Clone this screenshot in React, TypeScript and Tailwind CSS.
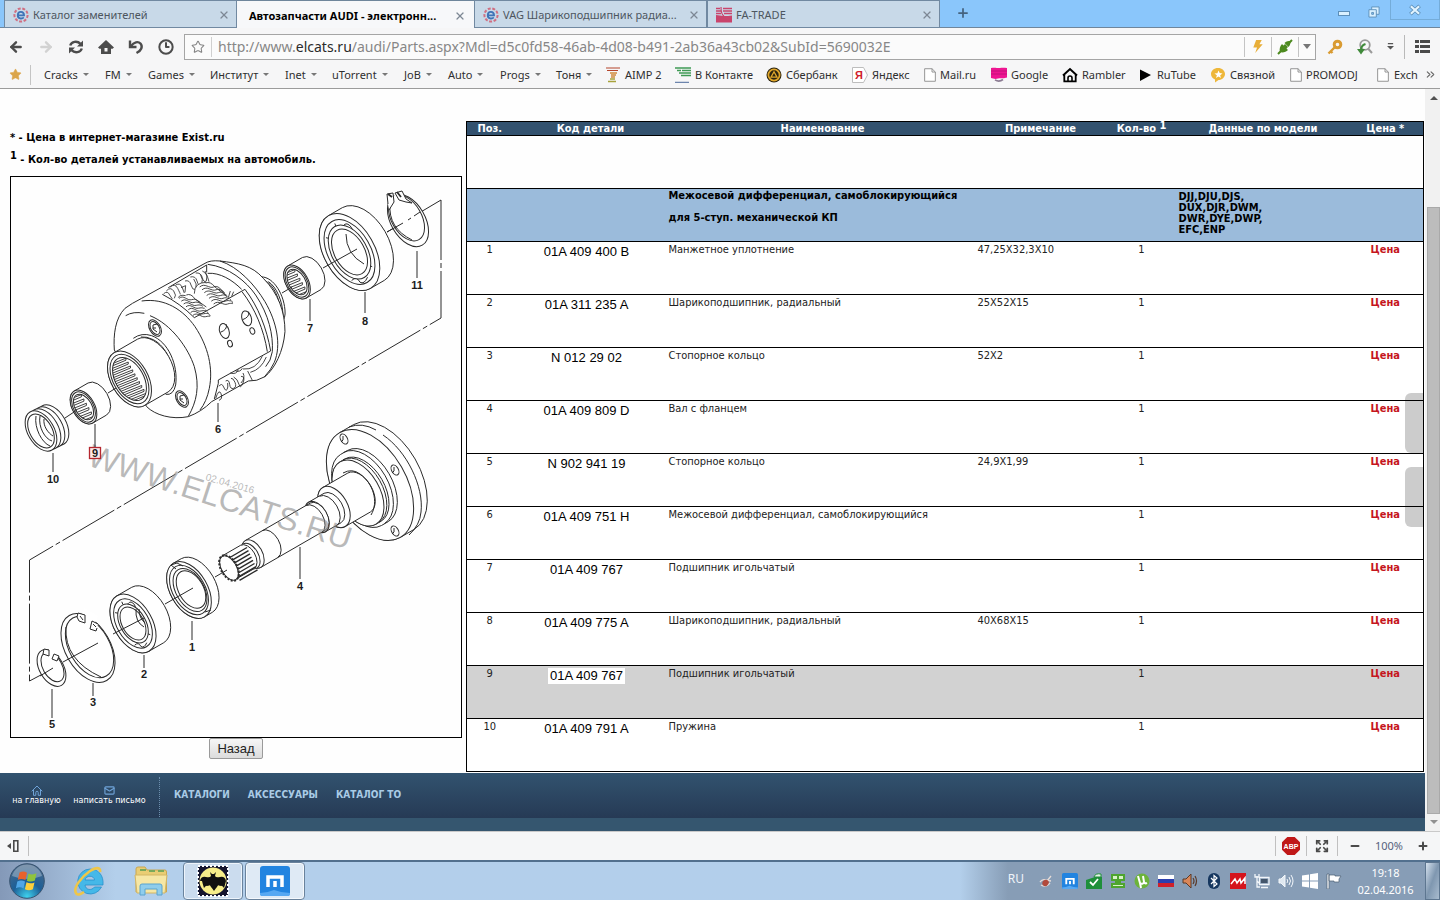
import type { ReactNode } from "react";
import {
  ArrowLeft,
  ArrowRight,
  ChevronsRight,
  Clock3,
  Expand,
  Mail,
  Minus,
  Plus,
  Star,
  X,
} from "lucide-react";

const UI_FONT = "font-['Noto_Sans',sans-serif]";
const PAGE_FONT = "font-['DejaVu_Sans_Condensed','DejaVu_Sans',sans-serif]";

/* ---------- small site icons ---------- */

function ElcatsIcon() {
  return (
    <svg viewBox="0 0 16 16" className="size-4 shrink-0" fill="none">
      <circle cx="8" cy="8" r="6.6" stroke="#cf6f82" strokeWidth="2" strokeDasharray="3 1.6" />
      <path d="M4.6 8.4h6.4c0-4.6-6-4.6-6.2-.2-.1 3.6 4 4.2 6 2.2" stroke="#3f74b8" strokeWidth="1.9" />
    </svg>
  );
}

function FaIcon() {
  return (
    <svg viewBox="0 0 16 16" className="size-4 shrink-0" fill="none">
      <path d="M0 8c3 0 5 1 8 1s5 0 8-.500V15.500H0z" fill="#c9446c" />
      <path d="M0 1.500h4M7 1.500h9M0 4h5M7 4h9M0 6.500h5M8 6.500h8" stroke="#c9446c" strokeWidth="1.500" />
      <path d="M5 0c0 6 1 8 3 9" stroke="#c9446c" strokeWidth="1.200" />
    </svg>
  );
}

function AimpIcon() {
  return (
    <svg viewBox="0 0 16 16" className="size-4 shrink-0" fill="none">
      <path d="M1 1h14M2 3.500h11" stroke="#b4452c" strokeWidth="1.200" />
      <path d="M5 6h7M6 8h5M6 10h4" stroke="#cf8a3e" strokeWidth="1.400" />
      <path d="M5 12h5M3 14.500h8" stroke="#a8a23c" strokeWidth="1.400" />
    </svg>
  );
}

function VkIcon() {
  return (
    <svg viewBox="0 0 16 16" className="size-4 shrink-0" fill="none">
      <path d="M0 1h16M2 3.500h4M7 3.500h9M4 6h12M6 8.500h10" stroke="#3f9a55" strokeWidth="1.300" />
      <path d="M0 15.300h14" stroke="#4c6a9a" strokeWidth="1" />
    </svg>
  );
}

function SberIcon() {
  return (
    <svg viewBox="0 0 16 16" className="size-4 shrink-0" fill="none">
      <circle cx="8" cy="8" r="7.500" fill="#2b2410" />
      <circle cx="8" cy="8" r="5.600" stroke="#e0a62b" strokeWidth="1.800" />
      <path d="M8 4.800l3 5.400H5z" fill="#2b2410" stroke="#e0a62b" strokeWidth="1.300" />
    </svg>
  );
}

function YandexIcon() {
  return (
    <svg viewBox="0 0 16 16" className="size-4 shrink-0" fill="none">
      <path d="M.5.5h11l4 7.500-4 7.500H.5z" fill="#fff" stroke="#bdbdbd" />
      <text x="3" y="12" fontSize="11" fontWeight="700" fill="#d0202a" fontFamily="Liberation Sans, sans-serif">
        Я
      </text>
    </svg>
  );
}

function PageIcon() {
  return (
    <svg viewBox="0 0 13 15" className="h-4 w-3 shrink-0" fill="none">
      <path d="M.7.7h8l3.600 3.600v10H.7z" fill="#fff" stroke="#8d8d8d" />
      <path d="M8.700.7v3.600h3.600" stroke="#8d8d8d" />
    </svg>
  );
}

function GoogleIcon() {
  return (
    <svg viewBox="0 0 16 16" className="size-4 shrink-0" fill="none">
      <path d="M0 1c5-1 6 .5 9 0s5 0 7 0V10.500c-4 1.500-6 0-9 1s-5 0-7-.5z" fill="#ee1591" />
      <path d="M0 4h16M0 7h16" stroke="#b01270" strokeWidth=".7" />
      <path d="M4 12.800c3 2 5 2 8-.300" stroke="#8b7b92" strokeWidth="1.600" />
    </svg>
  );
}

function RamblerIcon() {
  return (
    <svg viewBox="0 0 16 16" className="size-4 shrink-0" fill="none">
      <path d="M1 8.500L8 2l7 6.500" stroke="#000" strokeWidth="2" />
      <path d="M2.300 8v6.300h11.400V8" stroke="#000" strokeWidth="1.800" />
      <path d="M6 15v-4a2 2 0 014 0v4" stroke="#000" strokeWidth="1.600" />
    </svg>
  );
}

function PlayIcon() {
  return (
    <svg viewBox="0 0 14 16" className="h-4 w-[14px] shrink-0">
      <path d="M1 2.500L12 8 1 14z" fill="#000" />
    </svg>
  );
}

function SvyaznoyIcon() {
  return (
    <svg viewBox="0 0 16 16" className="size-4 shrink-0">
      <path d="M8 1c4 0 7 2.700 7 6s-3 6-6.500 6L5 15.500v-3C2.500 11.500 1 9.500 1 7c0-3.300 3-6 7-6z" fill="#eeb73a" />
      <path d="M8.500 3.500l1.200 2.600 2.800.4-2.300 1.700.7 2.800-2.400-1.600L6 11l.9-2.800-2.400-1.700 2.900-.3z" fill="#fff" />
    </svg>
  );
}

/* ---------- tabs ---------- */

function Tab({ icon, title, active }: { icon?: ReactNode; title: string; active?: boolean }) {
  return (
    <div
      className={
        active
          ? "flex h-7 w-[237px] items-center border-t border-[#6f869c] bg-[#f7f8fa] pt-[2px] pr-2 pl-3"
          : "flex h-7 w-[233px] items-center gap-1 border border-[#7189a1] bg-[#c8d9e8] pt-[2px] pr-[6px] pl-2"
      }
    >
      {icon}
      <a
        href="#tab"
        className={
          active
            ? "flex-1 text-[11px] leading-4 font-bold whitespace-nowrap text-black"
            : "flex-1 text-[11px] leading-4 whitespace-nowrap text-[#4d565f]"
        }
      >
        {title}
      </a>
      <button aria-label="Закрыть вкладку" className="text-[#7d8894]">
        <X size={12} strokeWidth={2.4} />
      </button>
    </div>
  );
}

function TabStrip() {
  return (
    <header className="flex h-7 shrink-0 bg-[#8ac6fb] pl-1 shadow-[inset_0_-1px_0_#6f869c]">
      <Tab icon={<ElcatsIcon />} title="Каталог заменителей" />
      <Tab active title="Автозапчасти AUDI - электронн..." />
      <Tab icon={<ElcatsIcon />} title="VAG Шарикоподшипник радиа..." />
      <Tab icon={<FaIcon />} title="FA-TRADE" />
      <button aria-label="Новая вкладка" className="mb-[2px] ml-4 text-[#45637f]">
        <Plus size={14} strokeWidth={3} />
      </button>
      <div className="ml-auto flex text-[#d9f0ff]">
        <button aria-label="Свернуть" className="flex h-6 w-7 items-end justify-center pb-2">
          <svg viewBox="0 0 12 5" className="h-[5px] w-3">
            <rect x=".5" y=".5" width="11" height="4" fill="#d9f0ff" stroke="#5d8fb8" />
          </svg>
        </button>
        <button aria-label="Восстановить" className="flex h-6 w-8 items-center justify-center">
          <svg viewBox="0 0 13 13" className="size-3" fill="#d9f0ff" stroke="#5d8fb8">
            <path d="M4 1h8v8H4z" />
            <path d="M1 4h8v8H1z" />
            <path d="M4 7h2v2H4z" fill="#8ac6fb" />
          </svg>
        </button>
        <button
          aria-label="Закрыть"
          className="flex h-5 w-[50px] items-center justify-center border border-t-0 border-[#74acd9]"
        >
          <svg viewBox="0 0 14 13" className="h-3 w-4">
            <path d="M2 2l10 9M12 2L2 11" stroke="#5d8fb8" strokeWidth="4" />
            <path d="M2.500 2.400l9 8.200M11.500 2.400l-9 8.200" stroke="#e2f4ff" strokeWidth="2.400" />
          </svg>
        </button>
      </div>
    </header>
  );
}

/* ---------- address bar ---------- */

function AddressRow() {
  return (
    <div className="flex h-[37px] shrink-0 items-center bg-[#f6f6f7] text-[#4c4c4c]">
      <nav className="flex w-[184px] items-center gap-[14px] pl-2">
        <button aria-label="Назад">
          <ArrowLeft size={16} strokeWidth={3.6} />
        </button>
        <button aria-label="Вперёд" className="text-[#d2d2d2]">
          <ArrowRight size={16} strokeWidth={3.6} />
        </button>
        <button aria-label="Обновить">
          <svg viewBox="0 0 16 16" className="size-4" fill="none" stroke="currentColor" strokeWidth="2.400">
            <path d="M2.200 6.500C3.500 2.500 9 1.300 12.500 4.800" />
            <path d="M13.800 9.500c-1.300 4-6.800 5.200-10.300 1.700" />
            <path d="M15 1.500v6H9z" fill="currentColor" stroke="none" />
            <path d="M1 14.500v-6h6z" fill="currentColor" stroke="none" />
          </svg>
        </button>
        <button aria-label="Домой">
          <svg viewBox="0 0 16 16" className="size-4" fill="currentColor">
            <path d="M8 1l8 7.500-1.500 1.300H13V15H3V9.800H1.500L0 8.500z" />
            <path d="M6.500 9h3v3.500h-3z" fill="#f6f6f7" />
          </svg>
        </button>
        <button aria-label="Отменить">
          <svg viewBox="0 0 16 16" className="size-4" fill="none" stroke="currentColor" strokeWidth="2.400">
            <path d="M2 1.500V8h6.500" />
            <path d="M3 7c3-4 7-5 9.500-2.500 2.500 3 1 7-4 9.500" />
          </svg>
        </button>
        <button aria-label="История">
          <Clock3 size={16} strokeWidth={3} />
        </button>
      </nav>
      <div className="flex h-[26px] flex-1 items-center border border-[#a5a5a5] bg-[#fbfbfb]">
        <button aria-label="В избранное" className="flex h-5 w-[27px] items-center justify-center border-r border-[#d0d0d0] text-[#858585]">
          <Star size={14} strokeWidth={1.8} />
        </button>
        <a href="#address" className="flex-1 truncate pl-[6px] text-[14px] leading-5 text-[#878787]">
          http://www.<span className="text-[#2b2b2b]">elcats.ru</span>
          /audi/Parts.aspx?Mdl=d5c0fd58-46ab-4d08-b491-2ab36a43cb02&amp;SubId=5690032E
        </a>
        <button aria-label="Ускорение" className="flex h-5 w-[27px] items-center justify-center border-l border-[#c4c4c4]">
          <svg viewBox="0 0 12 16" className="h-[15px] w-3">
            <path d="M4 1h6L7.500 5.500H11L3 15l2-6H1z" fill="#e8ae38" />
          </svg>
        </button>
        <button aria-label="Прокси" className="flex h-5 w-[27px] items-center justify-center border-l border-[#c4c4c4]">
          <svg viewBox="0 0 16 16" className="size-4" fill="#4d8a1f">
            <path d="M1 15l3-3M12 4l3-3" stroke="#4d8a1f" strokeWidth="2" />
            <path d="M3 13c-1-3 0-6 2-8l1.500 1.500L8 5l3 3-1.500 1.500L11 11c-2 2-5 3-8 2zM7.500 4c2-2 4-2 6-2 0 2 0 4-2 6z" />
          </svg>
        </button>
        <button aria-label="Список адресов" className="flex h-5 w-[17px] items-center justify-center border-l border-[#c4c4c4]">
          <svg viewBox="0 0 8 5" className="h-[5px] w-2">
            <path d="M0 0h8L4 5z" fill="#777" />
          </svg>
        </button>
      </div>
      <div className="flex h-full w-[124px] items-center pl-[11px]">
        <button aria-label="Пароли">
          <svg viewBox="0 0 16 16" className="size-4" fill="none" stroke="#d99b32">
            <circle cx="10.500" cy="5.500" r="3.300" strokeWidth="3" />
            <path d="M8 8l-6.500 6.500M3.500 12l2 2" strokeWidth="2.400" />
          </svg>
        </button>
        <button aria-label="Поиск" className="ml-[14px]">
          <svg viewBox="0 0 16 16" className="size-4" fill="none">
            <circle cx="8" cy="6" r="4.800" stroke="#9a9a9a" strokeWidth="1.800" />
            <path d="M11 9.500l4 4.500" stroke="#9a9a9a" strokeWidth="2" />
            <path d="M8.500 5C5.500 6 4 8 4 11" stroke="#3f8a3a" strokeWidth="2.200" />
            <path d="M0 10h8l-4 5.500z" fill="#3f8a3a" />
          </svg>
        </button>
        <button aria-label="Ещё" className="ml-[14px]">
          <svg viewBox="0 0 8 8" className="size-[7px]" fill="#555">
            <path d="M1 0h6v1.300H1zM0 3.300h8L4 7.500z" />
          </svg>
        </button>
        <span className="ml-[10px] h-6 border-l border-[#b9b9b9]" />
        <button aria-label="Меню" className="ml-[10px]">
          <svg viewBox="0 0 15 14" className="h-[14px] w-[15px]" fill="#4a4a4a">
            <path d="M0 0h4v3H0zM5 0h10v3H5zM0 5h4v3H0zM5 5h10v3H5zM0 10h4v3H0zM5 10h10v3H5z" />
          </svg>
        </button>
      </div>
    </div>
  );
}

/* ---------- bookmarks ---------- */

const folders = [
  { name: "Cracks", width: "w-[61px]" },
  { name: "FM", width: "w-[43px]" },
  { name: "Games", width: "w-[62px]" },
  { name: "Институт", width: "w-[75px]" },
  { name: "Inet", width: "w-[47px]" },
  { name: "uTorrent", width: "w-[72px]" },
  { name: "JoB", width: "w-[44px]" },
  { name: "Auto", width: "w-[52px]" },
  { name: "Progs", width: "w-[56px]" },
  { name: "Тоня", width: "w-[49px]" },
];

const links: { name: string; icon: ReactNode; width: string }[] = [
  { name: "AIMP 2", icon: <AimpIcon />, width: "w-[70px]" },
  { name: "В Контакте", icon: <VkIcon />, width: "w-[91px]" },
  { name: "Сбербанк", icon: <SberIcon />, width: "w-[86px]" },
  { name: "Яндекс", icon: <YandexIcon />, width: "w-[72px]" },
  { name: "Mail.ru", icon: <PageIcon />, width: "w-[67px]" },
  { name: "Google", icon: <GoogleIcon />, width: "w-[71px]" },
  { name: "Rambler", icon: <RamblerIcon />, width: "w-[77px]" },
  { name: "RuTube", icon: <PlayIcon />, width: "w-[71px]" },
  { name: "Связной", icon: <SvyaznoyIcon />, width: "w-[80px]" },
  { name: "PROMODJ", icon: <PageIcon />, width: "w-[87px]" },
];

function Bookmarks() {
  return (
    <nav className="flex h-6 shrink-0 items-center border-b border-[#9b9b9b] bg-[#f6f6f7] pb-1 text-[11px] leading-4 text-[#2f2f2f]">
      <button aria-label="Избранное" className="flex w-[30px] justify-center text-[#dba54a]">
        <Star size={13} fill="currentColor" strokeWidth={1} />
      </button>
      <span className="mr-[13px] h-5 border-l border-[#c4c4c4]" />
      {folders.map((f) => (
        <a key={f.name} href="#folder" className={`${f.width} flex shrink-0 items-center gap-[5px] whitespace-nowrap`}>
          {f.name}
          <svg viewBox="0 0 6 3" className="h-[3px] w-[6px] shrink-0">
            <path d="M0 0h6L3 3z" fill="#777" />
          </svg>
        </a>
      ))}
      {links.map((l) => (
        <a key={l.name} href="#link" className={`${l.width} flex shrink-0 items-center gap-1 whitespace-nowrap`}>
          {l.icon}
          {l.name}
        </a>
      ))}
      <a href="#link" className="flex flex-1 items-center gap-[5px] whitespace-nowrap">
        <PageIcon />
        Exch
      </a>
      <button aria-label="Ещё закладки" className="w-4 text-[#666]">
        <ChevronsRight size={13} strokeWidth={2} />
      </button>
    </nav>
  );
}

/* ---------- exploded parts drawing ---------- */

const AX = 0.866;
const AY = -0.5;
const ink = "#2a2a2a";

function Ring({ x, y, r, fill = "none" }: { x: number; y: number; r: number; fill?: string }) {
  return <ellipse cx={x} cy={y} rx={r * 0.6} ry={r} transform={`rotate(-30 ${x} ${y})`} fill={fill} />;
}

/* Cylinder whose near face is centred on x, y and which runs back along the shaft axis. */
function Cylinder({ x, y, r, d, face = true }: { x: number; y: number; r: number; d: number; face?: boolean }) {
  const bx = x + AX * d;
  const by = y + AY * d;
  const ux = r * 0.5;
  const uy = r * 0.866;
  return (
    <>
      <path
        fill="#fff"
        d={`M${x - ux} ${y - uy}L${bx - ux} ${by - uy}A${r * 0.6} ${r} -30 0 1 ${bx + ux} ${by + uy}L${x + ux} ${y + uy}A${r * 0.6} ${r} -30 0 1 ${x - ux} ${y - uy}`}
      />
      {face && <Ring x={x} y={y} r={r} fill="#fff" />}
    </>
  );
}

/* Right-hand half of a rim, seen on the side of a turned part. */
function Rim({ x, y, r }: { x: number; y: number; r: number }) {
  return <path d={`M${x - r * 0.5} ${y - r * 0.866}A${r * 0.6} ${r} -30 0 1 ${x + r * 0.5} ${y + r * 0.866}`} />;
}

function Needles({ id, x, y, r, step }: { id: string; x: number; y: number; r: number; step: number }) {
  const rows: number[] = [];
  for (let k = -r; k <= r; k += step) rows.push(k);
  return (
    <>
      <clipPath id={id}>
        <Ring x={x} y={y} r={r} />
      </clipPath>
      <g clipPath={`url(#${id})`} strokeWidth="0.9">
        {rows.map((k) => (
          <path key={k} d={`M${x + k * 0.5 - r * 0.7} ${y + k * 0.866 + r * 0.4}l${r * 1.05} ${-r * 0.42}l0 ${step * 0.45}l${-r} ${r * 0.42}`} />
        ))}
      </g>
      <Ring x={x} y={y} r={r} />
    </>
  );
}

function Bolt({ x, y }: { x: number; y: number }) {
  return (
    <>
      <Ring x={x} y={y} r={9} fill="#fff" />
      <Ring x={x} y={y} r={7} />
      <path d={`M${x + 2} ${y - 4}l-4 1 0 4 4 3M${x - 2} ${y}l3 0`} />
    </>
  );
}

function Bearing({ x, y, r, d, bore }: { x: number; y: number; r: number; d: number; bore: number }) {
  return (
    <>
      <Cylinder x={x} y={y} r={r} d={d} />
      <Ring x={x} y={y} r={r * 0.84} />
      <path
        d={`M${x - r * 0.35} ${y - r * 0.68}q${r * 0.05} ${r * 0.2} ${r * 0.2} ${r * 0.06}q${r * 0.08} ${-r * 0.12} ${r * 0.2} ${r * 0.04}l${r * 0.05} ${r * 0.14}M${x + r * 0.05} ${y + r * 0.68}q${r * 0.12} ${-r * 0.12} ${r * 0.2} ${r * 0.04}q${r * 0.1} ${r * 0.06} ${r * 0.18} ${-r * 0.12}M${x - r * 0.56} ${y - r * 0.34}l${r * 0.14} ${r * 0.03}M${x + r * 0.42} ${y + r * 0.3}l${r * 0.12} ${r * 0.05}`}
      />
      <Ring x={x} y={y} r={bore * 1.18} fill="#fff" />
      <Ring x={x} y={y} r={bore} fill="#fff" />
    </>
  );
}

/* Housing with its gear windows, drawn at three units to the pixel. */
function Housing() {
  return (
    <g transform="translate(105 255) scale(0.3333)" strokeWidth="3">
      <path d="M462 66C500 60 535 110 540 165Q543 190 528 205L500 120z" fill="#fff" />
      <path d="M476 76C505 85 525 130 527 175M490 80C515 95 533 140 534 180" />
      <path
        fill="#fff"
        d="M28 285C25 240 30 190 60 160Q80 145 110 130L300 25Q315 15 345 18C400 25 440 30 475 70C520 115 540 170 540 230C535 290 510 340 480 365Q455 380 430 378L320 440Q290 470 250 485C200 495 150 480 125 455z"
      />
      <path d="M345 18C400 35 450 90 480 140C515 200 530 270 508 322Q498 345 478 366M308 28C370 35 425 80 452 120C492 180 505 240 502 290Q498 318 482 335" />
      <path d="M420 103C460 155 485 220 497 288M411 110C450 160 477 225 487 290" />
      <path d="M172 118Q225 145 268 188L420 103M190 98L305 30V52M308 55C345 52 382 75 410 103" />
      <g fill="#fff" strokeWidth="2.500">
        <path d="M176 116q12-10 18 4l8 12M184 108q12-14 22 0t2 22M196 96q14-12 22 4t8 18M212 90q14-8 20 8l6 16M228 98l14-6-2 20" />
        <path d="M240 78q14-4 18 12t14 14q6-18-6-32M256 66q16-4 20 12t14 12q6-18-4-32M272 54q16-2 20 14t12 10q6-16-4-30M292 48q14 6 20 32" />
        <path d="M268 116q0-34 36-34M220 128q4-10 22-6" />
      </g>
      <g strokeWidth="2.600">
        {[0, 1, 2, 3, 4, 5, 6].map((i) => (
          <path key={i} d={`M${222 + i * 7} ${130 + i * 8.5}c14-12 24 8 38 4s18 4 ${26 - i * 3} ${8 - i * 3}`} />
        ))}
        {[0, 1, 2, 3, 4, 5, 6].map((i) => (
          <path key={i} d={`M${284 + i * 7} ${96 + i * 8.5}c16-14 28 6 42 0s18 6 ${30 - i * 3} ${14 - i * 4}`} />
        ))}
        <path d="M244 120q14-6 26 12l34 24M302 84q14-6 28 12l36 28M376 108l-6 20M386 110l-6 14" />
      </g>
      <path d="M497 288L340 375V385L328 432" />
      <g strokeWidth="2.600">
        <path d="M332 430q10-30 16-14t-6 20M342 394q8-12 14 2t10 8 2-20M362 378q10-6 12 10t12 12 4-18-12-12M386 366q12 6 16 22t12-4-6-20M376 354q18 6 24-10M392 348q14 4 20-8M408 384q14-16 6-30" />
        <path d="M428 348L442 376M414 342Q452 346 472 304M436 352Q468 344 484 306" />
      </g>
      <path d="M110 138C180 128 235 165 270 215C310 275 325 340 313 400Q305 440 285 465" />
      <path d="M62 182Q85 168 118 175M135 182C200 208 250 280 268 335C285 395 275 440 250 484" />
      <path d="M85 250Q110 232 140 242C190 260 220 330 212 390Q205 422 182 418" />
      <path d="M108 246Q125 244 145 254C185 275 208 330 203 385" />
      {[
        [358, 228],
        [425, 190],
      ].map(([x, y]) => (
        <g key={x}>
          <ellipse cx={x} cy={y} rx="14" ry="23" transform={`rotate(-18 ${x} ${y})`} />
          <path d={`M${x + 6} ${y - 20}q4 16-18 24`} />
          <ellipse cx={x + 17} cy={y + 38} rx="7" ry="10" transform={`rotate(-18 ${x + 17} ${y + 38})`} />
        </g>
      ))}
    </g>
  );
}

const callouts = [
  { n: "11", x: 417, from: 251, to: 278, y: 289 },
  { n: "7", x: 310, from: 299, to: 321, y: 332 },
  { n: "8", x: 365, from: 292, to: 313, y: 325 },
  { n: "6", x: 218, from: 403, to: 422, y: 433 },
  { n: "9", x: 95, from: 424, to: 447, y: 457 },
  { n: "10", x: 53, from: 453, to: 472, y: 483 },
  { n: "1", x: 192, from: 621, to: 640, y: 651 },
  { n: "2", x: 144, from: 655, to: 668, y: 678 },
  { n: "3", x: 93, from: 683, to: 696, y: 706 },
  { n: "5", x: 52, from: 689, to: 718, y: 728 },
  { n: "4", x: 300, from: 547, to: 579, y: 590 },
];

function Drawing() {
  return (
    <svg
      viewBox="11 177 450 560"
      className="block w-full border border-black bg-[#fefefe]"
      role="img"
      aria-label="Межосевой дифференциал"
      fill="none"
      stroke={ink}
      strokeWidth="1"
    >
      {/* assembly axis */}
      <path d="M441 200V318L29.500 560V681" strokeDasharray="60 3 5 3" />
      <path d="M387 232L441 200M29.500 681L54 668" />

      {/* 11: outer circlip */}
      <Ring x={408} y={220.5} r={28.5} fill="#fff" />
      <Ring x={406.5} y={218} r={25} fill="#fff" />
      <path d="M390 204Q388 228 412 240" />
      <path d="M389 205l6-11 8 2 2 7-8 6z" fill="#fff" stroke="none" />
      <path d="M388 204l-1-10 6-1 1 9-5 8M399 200l-4-7 7-2 4 8 6 4-6-1z" fill="#fff" />
      <path d="M388 194l4 3M397 192l4 5" strokeWidth="1.800" />
      <path d="M387 232l16-9M408 220l3-2M414 216l6-4" />

      {/* 8: bearing */}
      <Bearing x={349.5} y={252} r={42} d={16} bore={25} />
      <path d="M346 234q0 20 18 30" />
      <path d="M323 268L357 249" />

      {/* 7: needle bearing */}
      <Cylinder x={297} y={282} r={18.5} d={17} />
      <Ring x={297} y={282} r={16.5} />
      <Needles id="needles7" x={297} y={282} r={14} step={5} />

      {/* 6: differential housing */}
      <Housing />
      <Bolt x={155} y={328} />
      <Bolt x={182} y={399} />
      <Cylinder x={129.5} y={379} r={30.5} d={27} />
      <Ring x={129.5} y={379} r={27} />
      <Needles id="splines" x={129.5} y={379} r={23.5} step={4.5} />

      {/* 9: needle bearing */}
      <Cylinder x={83.5} y={407} r={18.5} d={16} />
      <Ring x={83.5} y={407} r={16.5} />
      <Needles id="needles9" x={83.5} y={407} r={14} step={5} />

      {/* 10: spring */}
      {[12, 8, 4, 0].map((s) => (
        <Ring key={s} x={41 + s} y={431 - s * 0.5} r={22} fill="#fff" />
      ))}
      <Ring x={41} y={431} r={18.5} fill="#fff" />
      <path d="M36 416C34 428 42 443 50 446M40 416C38 427 45 439 52 441M44 419C43 426 48 433 53 436" />

      {/* 4: flanged shaft */}
      <Cylinder x={370} y={485} r={60.5} d={16} />
      <path d="M349 427Q362 422 376 430M383 435C407 451 424 487 421 512Q420 525 409 535" />
      <Ring x={344} y={439} r={5.5} />
      <Ring x={395} y={470} r={5.5} />
      <Ring x={395} y={531} r={5.5} />
      <path d="M343 436v4l-2 2M394 467v4l-2 2M394 528v4l-2 2" />
      <Cylinder x={361} y={490} r={41} d={8} face={false} />
      <Rim x={364} y={488} r={41} />
      <Cylinder x={358} y={493} r={36} d={6} />
      <Rim x={361} y={491} r={36} />
      <Cylinder x={334} y={507} r={22.5} d={29} />
      <path d="M343 473Q352 468 360 474C373 483 379 502 371 515" />
      <Cylinder x={317} y={517} r={17} d={18} />
      <Rim x={328} y={511} r={17} />
      <Cylinder x={253} y={554} r={15.5} d={75} face={false} />
      <Rim x={314} y={519} r={15.5} />
      <Rim x={270} y={544} r={15.5} />
      <Ring x={253} y={554} r={15.5} fill="#fff" />
      <Ring x={250} y={556} r={14} fill="#fff" />
      <Cylinder x={230} y={567} r={13.5} d={20} face={false} />
      {[0, 1, 2, 3, 4, 5, 6, 7].map((i) => (
        <path key={i} d={`M${229 + i * 1.5} ${558 + i * 3.2}l18 -10.5`} strokeWidth="1.400" />
      ))}
      <ellipse cx="229" cy="568" rx="7.500" ry="13.500" transform="rotate(-30 229 568)" fill="#fff" />
      <ellipse cx="229" cy="568" rx="8" ry="14" transform="rotate(-30 229 568)" strokeWidth="2" strokeDasharray="2 1.500" />

      {/* 1: oil seal */}
      <Cylinder x={189} y={590} r={31} d={9} />
      <Ring x={189} y={590} r={27} />
      <Ring x={190} y={590} r={23.5} />
      <Ring x={191} y={589.5} r={20.5} />
      <path d="M176 569l-5-4 6-2 6 3M205 612l6-2" />

      {/* 2: bearing */}
      <Bearing x={133} y={623.5} r={32} d={17} bore={18} />
      <path d="M136 609q-1 13 8 18M139 609q0 9 6 14" />

      {/* 3: inner circlip */}
      <Ring x={88} y={648} r={37.5} fill="#fff" />
      <Ring x={89.5} y={647} r={33.5} fill="#fff" />
      <path d="M66 627Q64 660 101 677" />
      <path d="M84 608l14 8-6 14-12-4z" fill="#fff" stroke="none" />
      <path d="M77 617l2 4 6 2v-8l-7-2zM98 624l-6-3-2 8 6 2 1-3M80 616l3 4M93 624l3 3" fill="#fff" />

      {/* 5: inner circlip */}
      <Ring x={51.5} y={668} r={20} fill="#fff" />
      <Ring x={52.5} y={667} r={16} fill="#fff" />
      <path d="M49 648l9 4-3 9-8-2z" fill="#fff" stroke="none" />
      <path d="M43 654l6 2v-6l-5-1zM52 659l2-5 5 2-2 5z" fill="#fff" />

      {/* axis fragments between parts */}
      <path d="M282 293L292 287M108 393L116 388M65 418L77 410M215 577L227 570M165 604L193 588M113 634L144 618M63 662L98 643M40 676L53 668" />

      {/* stamp across the sheet */}
      <g fontFamily="Liberation Sans, Arial, sans-serif" stroke="none" fill="#8a8a8a">
        <text x="86" y="465" fontSize="32" fillOpacity="0.6" transform="rotate(18 86 465)">
          WWW.ELCATS.RU
        </text>
        <text x="205" y="480" fontSize="10" fillOpacity="0.6" transform="rotate(16 205 480)">
          02.04.2016
        </text>
      </g>

      {/* callouts */}
      <rect x="89.500" y="447.500" width="11" height="11" fill="#fbe9e9" stroke="#b5262e" strokeWidth="1.300" />
      {callouts.map((c) => (
        <g key={c.n}>
          <path d={`M${c.x} ${c.from}V${c.to}`} />
          <text x={c.x} y={c.y} textAnchor="middle" fontSize="11" fontWeight="700" fill="#1c1c1c" stroke="none" fontFamily="Liberation Sans, Arial, sans-serif">
            {c.n}
          </text>
        </g>
      ))}
    </svg>
  );
}

/* ---------- parts table ---------- */

type Part = { pos: string; code: string; name: string; note?: string; current?: boolean };

const parts: Part[] = [
  { pos: "1", code: "01A 409 400 B", name: "Манжетное уплотнение", note: "47,25X32,3X10" },
  { pos: "2", code: "01A 311 235 A", name: "Шарикоподшипник, радиальный", note: "25X52X15" },
  { pos: "3", code: "N 012 29 02", name: "Стопорное кольцо", note: "52X2" },
  { pos: "4", code: "01A 409 809 D", name: "Вал с фланцем" },
  { pos: "5", code: "N 902 941 19", name: "Стопорное кольцо", note: "24,9X1,99" },
  { pos: "6", code: "01A 409 751 H", name: "Межосевой дифференциал, самоблокирующийся" },
  { pos: "7", code: "01A 409 767", name: "Подшипник игольчатый" },
  { pos: "8", code: "01A 409 775 A", name: "Шарикоподшипник, радиальный", note: "40X68X15" },
  { pos: "9", code: "01A 409 767", name: "Подшипник игольчатый", current: true },
  { pos: "10", code: "01A 409 791 A", name: "Пружина" },
];

function PartsTable() {
  return (
    <table className="w-full table-fixed border-collapse border border-black text-[11px] leading-[13px] text-[#222]">
      <colgroup>
        <col className="w-[46px]" />
        <col className="w-[156px]" />
        <col />
        <col className="w-[128px]" />
        <col className="w-[74px]" />
        <col className="w-[169px]" />
        <col className="w-[76px]" />
      </colgroup>
      <thead>
        <tr className="h-[14px] bg-[#33526f] text-white">
          <th className="p-0">Поз.</th>
          <th className="p-0">Код детали</th>
          <th className="p-0">Наименование</th>
          <th className="p-0">Примечание</th>
          <th className="p-0 whitespace-nowrap">
            Кол-во <span className="relative -top-[3px] leading-none">1</span>
          </th>
          <th className="p-0">Данные по модели</th>
          <th className="p-0">Цена *</th>
        </tr>
      </thead>
      <tbody>
        <tr className="h-[53px] border-t border-black">
          <td colSpan={7} />
        </tr>
        <tr className="h-[53px] border-t border-black bg-[#9bbbdb] align-top font-bold text-black">
          <td colSpan={2} />
          <td colSpan={3} className="p-0 leading-[22px]">
            <span className="-mt-1 block">
              Межосевой дифференциал, самоблокирующийся
              <br />
              для 5-ступ. механической КП
            </span>
          </td>
          <td className="p-0 pt-[2px] leading-[11px]">
            DJJ,DJU,DJS,
            <br />
            DUX,DJR,DWM,
            <br />
            DWR,DYE,DWP,
            <br />
            EFC,ENP
          </td>
          <td />
        </tr>
        {parts.map((p) => (
          <tr
            key={p.pos}
            className={
              p.current
                ? "h-[53px] border-t border-black bg-[#d2d2d2] align-top"
                : "h-[53px] border-t border-black bg-white align-top"
            }
          >
            <td className="p-0 pt-px text-center">{p.pos}</td>
            <td className="p-0 pt-[2px] pr-2 text-center">
              <a
                href="#part"
                className={
                  p.current
                    ? "inline-block bg-white px-[2px] font-['Liberation_Sans',Arial,sans-serif] text-[13px] leading-4 text-black"
                    : "inline-block px-[2px] font-['Liberation_Sans',Arial,sans-serif] text-[13px] leading-4 text-black"
                }
              >
                {p.code}
              </a>
            </td>
            <td className="p-0 pt-px">{p.name}</td>
            <td className="p-0 pt-px pl-px">{p.note}</td>
            <td className="p-0 pt-px text-center">1</td>
            <td />
            <td className="p-0 pt-px text-center">
              <a href="#price" className="font-bold text-[#c5161d]">
                Цена
              </a>
            </td>
          </tr>
        ))}
      </tbody>
    </table>
  );
}

function SiteFooter() {
  return (
    <footer className="flex flex-1 flex-col bg-[#35566f]">
      <div className="flex h-[45px] items-start bg-linear-to-b from-[#32536f] to-[#263a55]">
        <a href="#home" className="flex w-[73px] flex-col items-center pt-3 font-['DejaVu_Sans',sans-serif] text-[8px] leading-[10px] text-white">
          <svg viewBox="0 0 12 11" className="h-[11px] w-3" fill="none" stroke="#6fa3d8">
            <path d="M.7 6.300L6 1l5.300 5.300M2.500 5v5.300h2.300V7.500a1.200 1.200 0 012.400 0v2.800h2.300V5" />
          </svg>
          на главную
        </a>
        <a
          href="#mail"
          className="flex w-[73px] flex-col items-center pt-3 font-['DejaVu_Sans',sans-serif] text-[8px] leading-[10px] whitespace-nowrap text-white"
        >
          <Mail size={11} strokeWidth={2.4} className="text-[#6fa3d8]" />
          написать письмо
        </a>
        <span className="mt-1 ml-[13px] h-10 border-l border-dotted border-[#6d8fae]" />
        <nav className="flex gap-[18px] pt-[14px] pl-[14px] text-[10px] leading-4 font-bold text-[#a9cbe6]">
          <a href="#catalogs">КАТАЛОГИ</a>
          <a href="#accessories">АКСЕССУАРЫ</a>
          <a href="#service">КАТАЛОГ ТО</a>
        </nav>
      </div>
    </footer>
  );
}

function Scrollbar() {
  return (
    <div className="flex w-[15px] shrink-0 flex-col items-center bg-[#f1f1f1] py-[7px] pl-[2px]">
      <svg viewBox="0 0 8 4" className="h-1 w-2">
        <path d="M0 4h8L4 0z" fill="#505050" />
      </svg>
      <div className="mt-[107px] mb-[6px] w-full flex-1 border border-[#a9a9a9] bg-[#bcbcbc]" />
      <svg viewBox="0 0 8 4" className="h-1 w-2">
        <path d="M0 0h8L4 4z" fill="#909090" />
      </svg>
    </div>
  );
}

/* ---------- bottom bars ---------- */

function StatusBar() {
  return (
    <div className="flex h-[29px] shrink-0 items-center border-t border-[#c9c9c9] bg-[#f5f6f7] text-[#4a4a4a]">
      <button aria-label="Боковая панель" className="ml-[7px]">
        <svg viewBox="0 0 12 12" className="size-3" fill="none">
          <path d="M4 3v6L0 6z" fill="#4a4a4a" />
          <path d="M6.800.800h4v10.400h-4z" stroke="#4a4a4a" strokeWidth="1.600" />
        </svg>
      </button>
      <span className="ml-[9px] h-5 border-l border-[#c0c0c0]" />
      <span className="ml-auto h-5 border-l border-[#c0c0c0]" />
      <button aria-label="Adblock Plus" className="mx-[6px]">
        <svg viewBox="0 0 18 18" className="size-[18px]">
          <path d="M5.300 0h7.400L18 5.300v7.400L12.700 18H5.300L0 12.700V5.300z" fill="#c01818" />
          <text x="9" y="11.800" textAnchor="middle" fontSize="7" fontWeight="700" fill="#fff" fontFamily="Liberation Sans, sans-serif">
            ABP
          </text>
        </svg>
      </button>
      <span className="h-5 border-l border-[#c0c0c0]" />
      <button aria-label="Полный экран" className="mx-[8px]">
        <Expand size={14} strokeWidth={3} />
      </button>
      <span className="h-5 border-l border-[#c0c0c0]" />
      <button aria-label="Уменьшить" className="ml-[11px]">
        <Minus size={12} strokeWidth={4} />
      </button>
      <span className="w-[56px] text-center text-[11px] leading-4 text-[#56627c]">100%</span>
      <button aria-label="Увеличить" className="mr-[11px]">
        <Plus size={12} strokeWidth={4} />
      </button>
    </div>
  );
}

function StartOrb() {
  return (
    <svg viewBox="0 0 36 36" className="size-9">
      <defs>
        <radialGradient id="orb" cx=".5" cy=".95" r=".95">
          <stop offset="0" stopColor="#3fd2ee" />
          <stop offset=".45" stopColor="#1c5f97" />
          <stop offset="1" stopColor="#4c6a8a" />
        </radialGradient>
      </defs>
      <circle cx="18" cy="18" r="17.300" fill="url(#orb)" stroke="#38536f" />
      <path d="M3 13a15.500 15.500 0 0130 0q-15 6-30 0z" fill="#fff" opacity=".3" />
      <path d="M10.500 9.500q4-2 7.500.3l-1.600 7.200q-3.700-2-7.600-.3z" fill="#e8622c" />
      <path d="M19.500 10.500q4 2 8-.2l-1.600 7.200q-4 2-8 .2z" fill="#8fc43c" />
      <path d="M8.300 18.400q4-1.800 7.700.2l-1.500 6.800q-3.600-2-7.600-.2z" fill="#4fa6e6" />
      <path d="M17.500 19.300q4 1.900 8 .1l-1.600 6.900q-4 2-8 0z" fill="#fbcf3b" />
    </svg>
  );
}

function IeIcon() {
  return (
    <svg viewBox="0 0 32 32" className="size-8" fill="none">
      <path
        d="M17 4a12.500 12.500 0 1011.500 18h-7c-3 4-9 3-9.500-2h18C31 10 25 4 17 4zm-5 11c1-5 9-5 9.500 0z"
        fill="#45b8e8"
        stroke="#2a8fca"
        strokeWidth=".8"
      />
      <path d="M27 7c1-5-4-5-10-1C8 12 0 23 3 28c1 3 5 1 8-1" stroke="#efc648" strokeWidth="2.600" />
    </svg>
  );
}

function FolderIcon() {
  return (
    <svg viewBox="0 0 34 32" className="h-8 w-[34px]">
      <path d="M2 4q0-2 2-2h7l2 3h18q1.500 0 1.500 2v20H2z" fill="#e9cd74" stroke="#c9a650" />
      <path d="M6 4h6v2H6zM15 5h6v2h-6zM24 5h6v2h-6z" fill="#7aa95a" />
      <path d="M1 10h32l-2 18H3z" fill="#f6e7a5" stroke="#d3b665" />
      <path d="M6 30V21q0-2 2-2h18q2 0 2 2v9h-5v-6H11v6z" fill="#8fcdec" stroke="#5ba4cf" />
    </svg>
  );
}

function BatIcon() {
  return (
    <svg viewBox="0 0 32 32" className="size-8">
      <rect x="1" y="1" width="30" height="30" fill="#15152e" stroke="#fff" strokeWidth="2" strokeDasharray="2 2" />
      <circle cx="16" cy="16" r="13.500" fill="#f7ee8a" />
      <path
        d="M3 16q1-5 6-4 4 1 5-1l-1-4 2 2h2l2-2-1 4q1 2 5 1 5-1 6 4-1 4-2 7-2-3-4-2-2-2-3 1-1 1-3 4-2-3-3-4-1-3-3-1-2-1-4 2-1-3-2-7z"
        fill="#111"
      />
    </svg>
  );
}

function MaxthonIcon({ className }: { className: string }) {
  return (
    <svg viewBox="0 0 30 30" className={className}>
      <rect width="30" height="30" rx="3" fill="#2284e0" />
      <path d="M0 27q7 0 14-3 8 3 16 3v1q0 2-2 2H2q-2 0-2-2z" fill="#57a8f2" />
      <path d="M8 21V11h14v10M15 15v6" fill="none" stroke="#fff" strokeWidth="3.500" />
    </svg>
  );
}

const tray: { label: string; icon: ReactNode }[] = [
  {
    label: "Punto",
    icon: (
      <svg viewBox="0 0 16 16" className="size-4">
        <path d="M2 9q3-4 7-1l4-5M3 12q5 3 9-2M7 7l6 1" fill="none" stroke="#e6dcd8" strokeWidth="1.300" />
        <path d="M5 8q4-3 6 1-1 5-5 4-3-2-1-5z" fill="#b24a3c" />
      </svg>
    ),
  },
  { label: "Maxthon", icon: <MaxthonIcon className="size-4" /> },
  {
    label: "Kaspersky",
    icon: (
      <svg viewBox="0 0 16 16" className="size-4">
        <path d="M8 4q1-4 7-3v3H9z" fill="#e9f4ea" stroke="#1f8f3a" />
        <path d="M0 7l9-3h7v12H0z" fill="#1f8f3a" />
        <path d="M4 9l3 3 5-6" fill="none" stroke="#fff" strokeWidth="1.800" />
      </svg>
    ),
  },
  {
    label: "RoboForm",
    icon: (
      <svg viewBox="0 0 16 16" className="size-4">
        <path d="M1 1h14v7H1zM5 8h6v2h4v5H1v-5h4z" fill="#4ea52e" />
        <path d="M3 3h4v3H3zM9 3h4v3H9zM3 12h10v1H3z" fill="#d9f2c8" />
      </svg>
    ),
  },
  {
    label: "uTorrent",
    icon: (
      <svg viewBox="0 0 16 16" className="size-4">
        <circle cx="8" cy="8" r="7.500" fill="#6cb33a" />
        <path d="M4 3l2 7q3 2 4-1L9 3M10 9q1 2 3 1M6 10l1 5" fill="none" stroke="#fff" strokeWidth="2" />
      </svg>
    ),
  },
  {
    label: "Язык",
    icon: (
      <svg viewBox="0 0 16 12" className="h-3 w-4">
        <path d="M0 0h16v4H0z" fill="#fff" />
        <path d="M0 4h16v4H0z" fill="#2b3fae" />
        <path d="M0 8h16v4H0z" fill="#d0202a" />
      </svg>
    ),
  },
  {
    label: "Realtek",
    icon: (
      <svg viewBox="0 0 16 16" className="size-4" fill="none" stroke="#5b3a28">
        <path d="M1 6h3l5-5v14l-5-5H1z" fill="#d9875a" />
        <path d="M11 5q2 3 0 6M13 3q3 5 0 10" stroke="#5b3a28" strokeWidth="1.200" />
      </svg>
    ),
  },
  {
    label: "Bluetooth",
    icon: (
      <svg viewBox="0 0 16 16" className="size-4" fill="none">
        <rect x="2" width="12" height="16" rx="6" fill="#16375f" />
        <path d="M5 5l6 6-3 2.500v-11L11 5l-6 6" stroke="#fff" strokeWidth="1.200" />
      </svg>
    ),
  },
  {
    label: "AIMP",
    icon: (
      <svg viewBox="0 0 16 16" className="size-4" fill="none">
        <rect width="16" height="16" fill="#d5141c" />
        <path d="M1 11l4-5 2 4 3-4 1 4 4-5v6" stroke="#fff" strokeWidth="1.500" />
      </svg>
    ),
  },
  {
    label: "Сеть",
    icon: (
      <svg viewBox="0 0 16 16" className="size-4" fill="none" stroke="#f2f6fa" strokeWidth="1.300">
        <path d="M5.500 4.500h9.500v7H5.500zM7 14.500h7M3 3v5l2 2M1 1v3h4V1M3 8v6h3" />
        <path d="M7 6h6.500v4H7z" fill="#44566b" stroke="none" />
      </svg>
    ),
  },
  {
    label: "Громкость",
    icon: (
      <svg viewBox="0 0 16 16" className="size-4" fill="none" stroke="#f2f6fa">
        <path d="M1 6h2l4-4v12l-4-4H1z" fill="#dfe8f0" />
        <path d="M9 6q1.500 2 0 4M11 4q3 4 0 8M13 2q4 6 0 12" />
      </svg>
    ),
  },
  {
    label: "Windows",
    icon: (
      <svg viewBox="0 0 16 16" className="size-4" fill="#fff">
        <path d="M0 2.500l7-1v6H0zM8 1.300L16 0v7.500H8zM0 8.500h7v6l-7-1zM8 8.500h8V16l-8-1.300z" />
      </svg>
    ),
  },
  {
    label: "Центр поддержки",
    icon: (
      <svg viewBox="0 0 16 16" className="size-4" fill="#fff" stroke="#4b5e73" strokeWidth=".7">
        <path d="M1 1h2v15H1zM3 2h6v1h6l-2 3 0 3H8V8H3z" />
      </svg>
    ),
  },
];

function Taskbar() {
  return (
    <footer className="flex h-10 shrink-0 items-center border-t-2 border-[#52708e] bg-linear-to-r from-[#8499b8] via-[#b3cfeb] via-8% to-[#b3cfeb]">
      <button aria-label="Пуск" className="ml-[9px]">
        <StartOrb />
      </button>
      <button aria-label="Internet Explorer" className="ml-[28px]">
        <IeIcon />
      </button>
      <button aria-label="Проводник" className="ml-[29px]">
        <FolderIcon />
      </button>
      <button
        aria-label="The Bat!"
        className="ml-[15px] flex h-full w-[60px] items-center justify-center rounded-sm border border-[#6a839d] bg-[#cbdcee] inset-shadow-[0_0_0_1px_#edf4fb]"
      >
        <BatIcon />
      </button>
      <button
        aria-label="Maxthon"
        className="ml-[2px] flex h-full w-[60px] items-center justify-center rounded-sm border border-[#6a839d] bg-[#dfeaf5] inset-shadow-[0_0_0_1px_#f5f9fd]"
      >
        <MaxthonIcon className="size-[30px]" />
      </button>
      <div className="ml-auto flex h-full w-[480px] items-center bg-linear-to-r from-[#b3cfeb] via-[#879db6] via-10% to-[#879db6]">
        <span className="ml-auto pb-1 text-[12px] leading-4 text-[#eef3f8]">RU</span>
        <div className="ml-[14px] flex gap-2">
          {tray.map((t) => (
            <button key={t.label} aria-label={t.label} className="flex w-4 items-center justify-center">
              {t.icon}
            </button>
          ))}
        </div>
        <div className="w-[83px] pl-1 text-center text-[11px] leading-[17px] text-white">
          19:18
          <br />
          02.04.2016
        </div>
        <button
          aria-label="Показать рабочий стол"
          className="h-full w-[15px] border border-[#5d7690] bg-linear-to-br from-[#d6e2ee] via-[#7f97b0] to-[#a9bccf]"
        />
      </div>
    </footer>
  );
}

export default function App() {
  return (
    <div className={`${UI_FONT} flex h-screen flex-col overflow-hidden bg-white`}>
      <TabStrip />
      <AddressRow />
      <Bookmarks />
      <div className="relative flex min-h-0 flex-1">
        <main className={`${PAGE_FONT} flex min-w-0 flex-1 flex-col overflow-hidden bg-[#fefefe]`}>
          <div className="flex items-start gap-1 pr-px pb-px pl-[10px]">
            <section className="flex w-[452px] shrink-0 flex-col items-center pt-[38px]">
              <div className="mb-[5px] self-stretch text-[11px] leading-[22px] font-bold text-black">
                <p>* - Цена в интернет-магазине Exist.ru</p>
                <p>
                  <span className="relative -top-1 leading-none">1</span> - Кол-во деталей устанавливаемых на автомобиль.
                </p>
              </div>
              <Drawing />
              <button className="h-[21px] rounded-[2px] border border-[#9a9a9a] bg-linear-to-b from-[#f6f6f6] to-[#dcdcdc] px-[7px] font-['Liberation_Sans',Arial,sans-serif] text-[13px] leading-4 text-[#222]">
                Назад
              </button>
            </section>
            <section className="min-w-0 flex-1 pt-8">
              <PartsTable />
            </section>
          </div>
          <SiteFooter />
        </main>
        <Scrollbar />
        <div className="absolute top-[304px] right-4 flex flex-col gap-[14px]">
          <button aria-label="Вверх" className="h-[60px] w-[19px] rounded-l-md bg-black/20" />
          <button aria-label="Вниз" className="h-[60px] w-[19px] rounded-l-md bg-black/20" />
        </div>
      </div>
      <StatusBar />
      <Taskbar />
    </div>
  );
}
